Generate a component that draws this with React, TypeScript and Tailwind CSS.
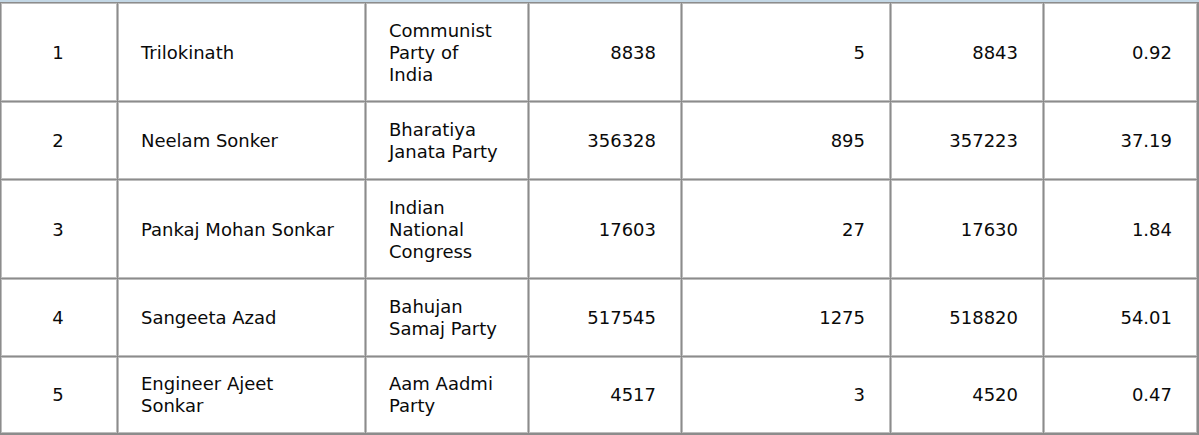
import React from "react";

type Row = {
  n: string;
  name: string[];
  party: string[];
  a: string;
  b: string;
  c: string;
  d: string;
};

const rows: Row[] = [
  { n: "1", name: ["Trilokinath"], party: ["Communist", "Party of", "India"], a: "8838", b: "5", c: "8843", d: "0.92" },
  { n: "2", name: ["Neelam Sonker"], party: ["Bharatiya", "Janata Party"], a: "356328", b: "895", c: "357223", d: "37.19" },
  { n: "3", name: ["Pankaj Mohan Sonkar"], party: ["Indian", "National", "Congress"], a: "17603", b: "27", c: "17630", d: "1.84" },
  { n: "4", name: ["Sangeeta Azad"], party: ["Bahujan", "Samaj Party"], a: "517545", b: "1275", c: "518820", d: "54.01" },
  { n: "5", name: ["Engineer Ajeet", "Sonkar"], party: ["Aam Aadmi", "Party"], a: "4517", b: "3", c: "4520", d: "0.47" },
];

const base = "bg-white border border-[#bdbdbd] flex items-center pl-[22px] pr-[24px] whitespace-nowrap";

function Lines({ items }: { items: string[] }) {
  return (
    <div>
      {items.map((t, i) => (
        <div key={i}>{t}</div>
      ))}
    </div>
  );
}

export default function App() {
  return (
    <div
      className="w-[1199px] h-[435px] overflow-hidden bg-[#c3d7e5] pt-[2px] text-[18px] leading-[22px] text-[#0a0a0a]"
      style={{ fontFamily: '"DejaVu Sans", Verdana, sans-serif' }}
    >
      <div className="grid grid-cols-[116px_247px_162px_152px_208px_152px_153px] grid-rows-[98px_77px_98px_77px_76px] gap-px bg-[#8c8c8c] pl-px pt-px pr-[2px] pb-[2px]">
        {rows.map((r) => {
          const cell = r.party.length === 3 ? `${base} pt-[2px]` : base;
          return (
            <React.Fragment key={r.n}>
              <div className={`${cell} justify-center`}>{r.n}</div>
              <div className={cell}>
                <Lines items={r.name} />
              </div>
              <div className={cell}>
                <Lines items={r.party} />
              </div>
              <div className={`${cell} justify-end`}>{r.a}</div>
              <div className={`${cell} justify-end`}>{r.b}</div>
              <div className={`${cell} justify-end`}>{r.c}</div>
              <div className={`${cell} justify-end`}>{r.d}</div>
            </React.Fragment>
          );
        })}
      </div>
    </div>
  );
}
